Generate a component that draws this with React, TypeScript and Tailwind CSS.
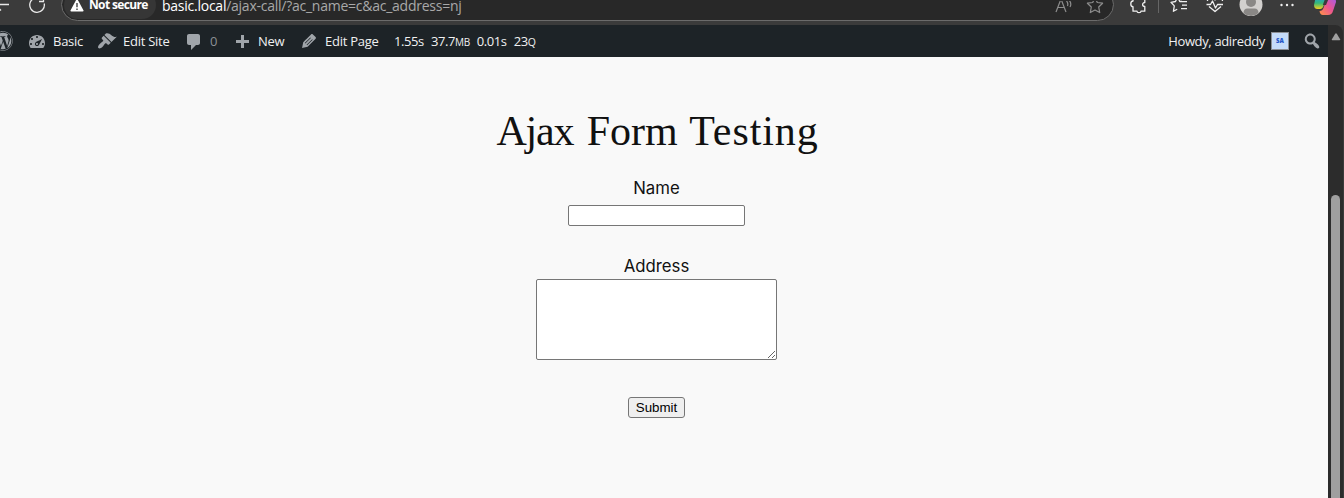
import React from "react";
import { FaWordpress } from "react-icons/fa";

const paths = {
  dashboard:
    "M3.76 17.01h12.48C17.34 15.63 18 13.9 18 12c0-4.41-3.58-8-8-8s-8 3.59-8 8c0 1.9.66 3.63 1.76 5.01zM9 6c0-.55.45-1 1-1s1 .45 1 1c0 .56-.45 1-1 1s-1-.44-1-1zM4 8c0-.55.45-1 1-1s1 .45 1 1c0 .56-.45 1-1 1s-1-.44-1-1zm4.52 3.4c.84-.83 6.51-3.5 6.51-3.5s-2.66 5.68-3.49 6.51c-.84.84-2.18.84-3.02 0-.83-.83-.83-2.18 0-3.01zM3 13c0-.55.45-1 1-1s1 .45 1 1c0 .56-.45 1-1 1s-1-.44-1-1zm6 0c0 .56.45 1 1 1s1-.44 1-1c0-.55-.45-1-1-1s-1 .45-1 1zm6 0c0-.55.45-1 1-1s1 .45 1 1c0 .56-.45 1-1 1s-1-.44-1-1z",
  brush:
    "M14.48 11.06L7.41 3.99l1.5-1.5c.5-.56 2.3-.47 3.51.32 1.21.8 1.43 1.28 2.91 2.1 1.18.64 2.45 1.26 4.45.85zm-.71.71L6.7 4.7 4.93 6.47c-.39.39-.39 1.02 0 1.41l1.06 1.06c.39.39.39 1.03 0 1.42-.6.6-1.43 1.11-2.21 1.69-.35.26-.7.53-1.01.84C1.43 14.23.4 16.08 1.4 17.07c.99 1 2.84-.03 4.18-1.36.31-.31.58-.66.85-1.02.57-.78 1.08-1.61 1.69-2.21.39-.39 1.02-.39 1.41 0l1.06 1.06c.39.39 1.02.39 1.41 0z",
  comment: "M5 2h9c1.1 0 2 .9 2 2v7c0 1.1-.9 2-2 2h-2l-5 5v-5H5c-1.1 0-2-.9-2-2V4c0-1.1.9-2 2-2z",
  plus: "M17 7v3h-5v5H9v-5H4V7h5V2h3v5h5z",
  pencil:
    "M13.89 3.39l2.71 2.72c.46.46.42 1.24.03 1.64l-8.01 8.02-5.56 1.16 1.16-5.58s7.6-7.63 7.99-8.03c.39-.39 1.22-.39 1.68.07zm-2.53 2.99l-5.59 5.61.5.5 5.59-5.61zm-3.27 7.93l5.58-5.6-.5-.5-5.59 5.6z",
  search:
    "M12.14 4.18c1.87 1.87 2.11 4.75.72 6.89.12.1.22.21.36.31.2.16.47.36.81.59.34.24.56.39.66.47.42.31.73.57.94.78.32.32.6.65.84 1 .25.35.44.69.59 1.04.14.35.21.68.18 1-.02.32-.14.59-.36.81s-.49.34-.81.36c-.31.02-.65-.04-.99-.19-.35-.14-.7-.34-1.04-.59-.35-.24-.68-.52-1-.84-.21-.21-.47-.52-.77-.93-.1-.13-.25-.35-.47-.66-.22-.32-.4-.57-.56-.78-.16-.2-.29-.35-.44-.5-2.07 1.09-4.69.76-6.44-.98-2.14-2.15-2.14-5.64 0-7.78 2.15-2.15 5.63-2.15 7.78 0zm-1.41 6.36c1.36-1.37 1.36-3.58 0-4.95-1.37-1.37-3.59-1.37-4.95 0-1.37 1.37-1.37 3.58 0 4.95 1.36 1.37 3.58 1.37 4.95 0z",
};

function AdminIcon({ name, className = "" }: { name: keyof typeof paths; className?: string }) {
  return (
    <svg viewBox="0 0 20 20" className={`size-5 shrink-0 fill-[#a0a5aa] ${className}`} fillRule="evenodd">
      <path d={paths[name]} />
    </svg>
  );
}

function BrowserBar() {
  return (
    <div className="flex h-[25px] items-start overflow-hidden bg-[#3b3b3b]">
      <svg viewBox="0 0 61 20" className="h-5 w-[61px] shrink-0" fill="none" stroke="#e8e8e8" strokeWidth="1.3">
        <path d="M-4 4.500H9M-5 4.500l6 6M44.200 3.500a7.300 7.300 0 1 1-3-4.500M43.500-4v5.500h-4.500" />
      </svg>
      <div className="-mt-3 flex h-[33px] w-[1053px] shrink-0 items-center rounded-full border border-[#6b6b6b] bg-[#282828] pl-0.5">
        <div className="flex h-7 w-[92px] shrink-0 items-center rounded-full bg-[#363636] pl-[6px] pt-[1px]">
          <svg viewBox="0 0 14 13" className="mr-[5px] h-[13px] w-3.5 shrink-0">
            <path d="M7 .5a1 1 0 0 1 .9.5l5.5 10.2a.9.9 0 0 1-.8 1.3H1.4a.9.9 0 0 1-.8-1.3L6.1 1A1 1 0 0 1 7 .5Z" fill="#fff" />
            <path d="M7 4v4.2M7 9.6V11" stroke="#333" strokeWidth="1.3" />
          </svg>
          <span className="whitespace-nowrap text-[12px] font-bold leading-3 tracking-[-0.65px] text-white">Not secure</span>
        </div>
        <div className="ml-1.5 whitespace-nowrap pt-[3px] text-[14px] leading-[14px] tracking-[-0.25px] text-[#a9a9a9]">
          <span className="text-white">basic.local</span>/ajax-call/?ac_name=c&amp;ac_address=nj
        </div>
        <svg viewBox="1050 0 60 20" className="ml-auto mr-[3px] mt-3 h-5 w-[60px] shrink-0" fill="none" stroke="#8d8d8d" strokeWidth="1.2">
          <path d="M1056 11l5-13 5 13M1058 6.5h6M1066.500 0q2 2 1 5M1069-1q3 3.500 1 7" />
          <path strokeLinejoin="round" d="M1095-3.500l2.300 5 5.300.7-3.900 3.800 1 5.600-4.700-2.700-4.700 2.700 1-5.600-3.900-3.800 5.300-.7z" />
        </svg>
      </div>
      <svg viewBox="1114 0 230 25" className="h-[25px] w-[230px] shrink-0" fill="none" stroke="#efefef" strokeWidth="1.3" strokeLinejoin="round">
        <defs>
          <linearGradient id="cl" x1="0" y1="0" x2="0" y2="1">
            <stop offset="0" stopColor="#2196e8" />
            <stop offset=".55" stopColor="#35b978" />
            <stop offset="1" stopColor="#f3cf20" />
          </linearGradient>
          <linearGradient id="cr" x1="1" y1="0" x2="0" y2="1">
            <stop offset="0" stopColor="#a65be8" />
            <stop offset=".5" stopColor="#ec5590" />
            <stop offset="1" stopColor="#ff9545" />
          </linearGradient>
        </defs>
        <path d="M1133-2v3c-1.500 0-2.200 1.500-2.200 3s.7 2.700 2.200 2.700v4.500h4c0 1.200.8 1.500 2 1.500s2-.3 2-1.500h3.800V6.500c-1.300 0-2.200-1-2.200-2s.9-2 2.200-2V-2" />
        <path d="M1158.500 0v13" stroke="#666" strokeWidth="1" />
        <path d="M1182 1.500h-2.200L1177.500-3l-2 4.500-4.500.8 3.300 3.600-.9 5.400 3.800-2.100M1181 1.700h6M1182 5.200h5M1181 8.700h6" />
        <path d="M1207.500 1q0-4 3.500-4t4 3q1-3 4-3t3.500 4M1206.500 4.500h4l2-3.500 3 7 2-3.500h5.500M1209 6.500l6 5 6-5" />
        <circle cx="1251" cy="4.500" r="11.500" fill="#d2d0ce" stroke="none" />
        <circle cx="1251" cy="2" r="5" fill="#8a8886" stroke="none" />
        <path d="M1243.500 13q0-4.500 4-4.500h7q4 0 4 4.500-3.200 3-7.500 3t-7.500-3Z" fill="#8a8886" stroke="none" />
        <g fill="#efefef" stroke="none">
          <circle cx="1281.500" cy="5" r="1.200" />
          <circle cx="1287" cy="5" r="1.200" />
          <circle cx="1292.500" cy="5" r="1.200" />
        </g>
        <path d="M1316-4h11l-3.500 10q-1 3-3.500 3h-2.500q-3.500 0-3.500-4Z" fill="url(#cl)" stroke="none" />
        <path d="M1329-2h4q3 0 3 4l-3 9q-1 4-5 4h-5q-3 0-3.500-4 3 0 4-3l3-8q1-2 2.500-2Z" fill="url(#cr)" stroke="none" />
        <path d="M1325-1h3.500l-2.500 6h-3.200z" fill="#3b3b3b" stroke="none" />
      </svg>
    </div>
  );
}

function AdminBar() {
  return (
    <div className="flex h-8 items-center overflow-hidden whitespace-nowrap bg-[#1d2327] text-[13px] tracking-[-0.26px] text-[#f0f0f1]">
      <div className="flex w-[27px] shrink-0">
        <FaWordpress className="-ml-[7px] size-5 shrink-0 text-[#a0a5aa]" />
      </div>
      <div className="flex w-[70px] shrink-0 items-center">
        <AdminIcon name="dashboard" className="mr-1.5" />
        <span className="pt-0.5">Basic</span>
      </div>
      <div className="flex w-[87px] shrink-0 items-center">
        <AdminIcon name="brush" className="mr-1.5" />
        <span className="pt-0.5">Edit Site</span>
      </div>
      <div className="flex w-[48px] shrink-0 items-center">
        <AdminIcon name="comment" className="mr-[6px] mt-0.5" />
        <span className="pt-0.5 text-[#8c9196]">0</span>
      </div>
      <div className="flex w-[68px] shrink-0 items-center">
        <AdminIcon name="plus" className="mr-[6px] mt-1" />
        <span className="pt-0.5">New</span>
      </div>
      <div className="flex w-[94px] shrink-0 items-center">
        <AdminIcon name="pencil" className="-ml-px mr-[6px]" />
        <span className="pt-0.5">Edit Page</span>
      </div>
      <div className="flex gap-[7px] pt-0.5 tracking-[-0.4px]">
        <span>1.55s</span>
        <span>37.7<span className="text-[10px]">MB</span></span>
        <span>0.01s</span>
        <span>23<span className="text-[10.500px]">Q</span></span>
      </div>
      <div className="ml-auto mr-1.5 flex items-center">
        <span className="pt-0.5 tracking-[-0.36px]">Howdy, adireddy</span>
        <div className="ml-1.5 mr-[13px] flex size-[18px] items-center justify-center border border-[#8c8f94] bg-[#c5dcfa] text-[6px] font-extrabold tracking-normal text-[#2456c8]">SA</div>
        <AdminIcon name="search" />
      </div>
    </div>
  );
}

export default function App() {
  return (
    <div className="h-[498px] w-[1344px] overflow-hidden bg-[#3b3b3b] font-['Open_Sans','Noto_Sans',sans-serif]">
      <BrowserBar />
      <div className="flex h-[473px]">
        <main className="w-[1328px] shrink-0 bg-[#f9f9f9]">
          <AdminBar />
          <div className="flex w-[1313px] flex-col items-center font-['Inter',sans-serif] text-[16.800px] text-[#111]">
            <h1 className="mt-[49px] h-[51px] whitespace-nowrap pl-[2px] font-['Liberation_Serif',serif] text-[42px] leading-[51px]">
              <span className="tracking-[-1.2px]">Ajax</span> <span className="ml-[3px] tracking-[0px]">Form</span> <span className="ml-[1px] tracking-[0.9px]">Testing</span>
            </h1>
            <label htmlFor="name" className="mt-[18px] h-[27px] leading-[27px]">Name</label>
            <input id="name" className="mt-[3px] h-[21px] w-[177px] rounded-[2px] border border-[#767676] bg-white" />
            <label htmlFor="address" className="mt-[27px] h-[26px] leading-[27px]">Address</label>
            <textarea id="address" className="h-[81px] w-[241px] rounded-[2px] border border-[#767676] bg-white" />
            <button className="mt-[37px] h-[21px] w-[57px] rounded-[3px] border border-[#767676] bg-[#efefef] font-['Liberation_Sans',sans-serif] text-[13.333px] leading-[19px] text-black">Submit</button>
          </div>
        </main>
        <aside className="flex w-[15px] flex-col items-center rounded-tr-lg bg-[#2c2c2c]">
          <svg viewBox="0 0 10 8" className="mt-2 h-2 w-2.5 shrink-0 fill-[#a0a0a0]">
            <path d="M4.200.7q.8-.9 1.600 0l3.300 5.600q.5 1-.5 1H1.400q-1 0-.5-1z" />
          </svg>
          <div className="mt-[154px] w-[9px] grow rounded-t-full bg-[#9f9f9f]" />
        </aside>
      </div>
    </div>
  );
}
